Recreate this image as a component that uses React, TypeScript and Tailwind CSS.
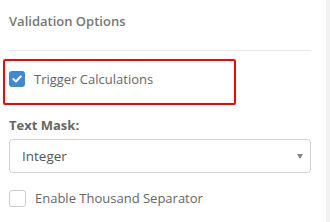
import React, { useState } from "react";

export default function App() {
  const [trigger, setTrigger] = useState(true);
  const [thousand, setThousand] = useState(false);
  const [mask, setMask] = useState("Integer");

  return (
    <div className="flex w-[330px] h-[222px] bg-white font-['Open_Sans',sans-serif] overflow-hidden">
      <div className="flex-1 pl-[9px] pr-[15px]">
        {/* header */}
        <div className="h-[51px] border-b border-[#e8e8e8] pt-[11px]">
          <h3 className="text-[13px] leading-[20px] font-semibold text-[#777]">Validation Options</h3>
        </div>

        {/* highlighted option */}
        <div className="mt-[8px] -ml-[6px] w-[233px] h-[46px] border-2 border-[#ff0000] rounded-[2px] pl-[4px] pt-[9px]">
          <label className="flex items-center gap-[9px] cursor-pointer">
            <span
              onClick={() => setTrigger(!trigger)}
              className="w-[16px] h-[16px] rounded-[3px] bg-[#4189d4] flex items-center justify-center"
            >
              {trigger && (
                <svg width="10" height="8" viewBox="0 0 10 8" fill="none">
                  <path d="M1.3 4.1L3.9 6.5L8.7 1.5" stroke="white" strokeWidth="2" strokeLinecap="round" strokeLinejoin="round" />
                </svg>
              )}
            </span>
            <span className="text-[13px] leading-[18px] text-[#666]">Trigger Calculations</span>
          </label>
        </div>

        {/* text mask */}
        <div className="mt-[11px] text-[13px] leading-[18px] font-bold text-[#666]">Text Mask:</div>
        <div className="relative mt-[5px]">
          <select
            value={mask}
            onChange={(e) => setMask(e.target.value)}
            className="appearance-none w-full h-[34px] border border-[#d0d0d0] rounded-[4px] pl-[12px] text-[13.5px] text-[#555] bg-white outline-none"
          >
            <option>Integer</option>
            <option>Decimal</option>
            <option>Currency</option>
          </select>
          <span className="absolute right-[8px] top-[15px] w-0 h-0 border-l-[3px] border-r-[3px] border-t-[5px] border-l-transparent border-r-transparent border-t-[#888] pointer-events-none" />
        </div>

        <label className="flex items-center gap-[9px] mt-[16px] cursor-pointer">
          <span
            onClick={() => setThousand(!thousand)}
            className={`w-[17px] h-[17px] rounded-[3px] border flex items-center justify-center ${thousand ? "bg-[#4189d4] border-[#4189d4]" : "bg-white border-[#ccc]"}`}
          >
            {thousand && (
              <svg width="10" height="8" viewBox="0 0 10 8" fill="none">
                <path d="M1.3 4.1L3.9 6.5L8.7 1.5" stroke="white" strokeWidth="2" strokeLinecap="round" strokeLinejoin="round" />
              </svg>
            )}
          </span>
          <span className="text-[13px] leading-[18px] text-[#666]">Enable Thousand Separator</span>
        </label>
      </div>
      <div className="w-[4px] bg-[#f2f2f2]" />
    </div>
  );
}
